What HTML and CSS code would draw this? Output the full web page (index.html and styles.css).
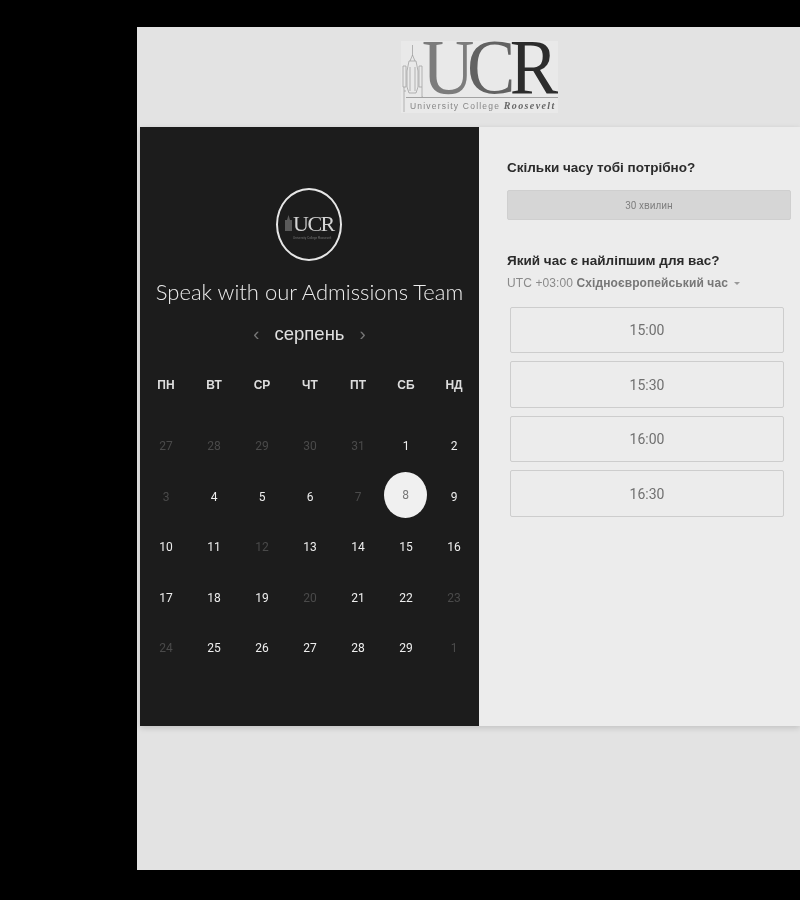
FILE: index.html
```html
<!DOCTYPE html>
<html lang="uk">
<head>
  <meta charset="UTF-8" />
  <title>Speak with our Admissions Team</title>
  <link rel="stylesheet" href="styles.css">
</head>
<body>
  <div class="page">
    <header class="top">
      <div class="logo">
        <svg class="tower" viewBox="0 0 22 72" width="22" height="72" fill="none" stroke="#a2a2a2" stroke-width="0.8">
          <path d="M11.5 4V15M9 20L11.5 14L14 20" />
          <path d="M8 20H15L17 30V46L15 52H8L6 46V30Z" />
          <path d="M9 26V50M14 26V50" />
          <path d="M2 25H5V46H2ZM18 25H21V46H18Z" />
          <path d="M3 46V71M5 50H3M21 46V56H22" />
        </svg>
        <div class="logo-text">
          <div class="logo-ucr"><span class="u">U</span><span class="c">C</span><span class="r">R</span></div>
          <div class="logo-sub">University College <em>Roosevelt</em></div>
        </div>
      </div>
    </header>

    <main class="panel">
      <section class="calendar">
        <div class="badge">
          <svg class="badge-tower" viewBox="0 0 7 16" width="7" height="16"><path d="M3.5 0L5 5H7V16H0V5H2Z" fill="#5a5a5a" /></svg>
          <div class="badge-words">
            <div class="badge-text">UCR</div>
            <div class="badge-sub">University College Roosevelt</div>
          </div>
        </div>
        <h1 class="title">Speak with our Admissions Team</h1>
        <div class="month">
          <span class="arrow">‹</span>
          <span>серпень</span>
          <span class="arrow">›</span>
        </div>
        <div class="weekdays">
          <span>ПН</span><span>ВТ</span><span>СР</span><span>ЧТ</span><span>ПТ</span><span>СБ</span><span>НД</span>
        </div>
        <div class="days">
          <span class="off">27</span><span class="off">28</span><span class="off">29</span><span class="off">30</span><span class="off">31</span><span>1</span><span>2</span>
          <span class="off">3</span><span>4</span><span>5</span><span>6</span><span class="off">7</span><span class="sel">8</span><span>9</span>
          <span>10</span><span>11</span><span class="off">12</span><span>13</span><span>14</span><span>15</span><span>16</span>
          <span>17</span><span>18</span><span>19</span><span class="off">20</span><span>21</span><span>22</span><span class="off">23</span>
          <span class="off">24</span><span>25</span><span>26</span><span>27</span><span>28</span><span>29</span><span class="off">1</span>
        </div>
      </section>

      <section class="times">
        <h2 class="q first">Скільки часу тобі потрібно?</h2>
        <div class="duration">30 хвилин</div>
        <h2 class="q second">Який час є найліпшим для вас?</h2>
        <div class="zone">UTC +03:00 <b>Східноєвропейський час</b> <i class="caret"></i></div>
        <div class="slots">
          <button class="slot">15:00</button>
          <button class="slot">15:30</button>
          <button class="slot">16:00</button>
          <button class="slot">16:30</button>
        </div>
      </section>
    </main>
  </div>
</body>
</html>
```

FILE: styles.css
```css
html, body {
  height: 100%;
}
body {
  margin: 0;
  background: #000;
  padding: 27px 0 30px 137px;
  box-sizing: border-box;
  overflow: hidden;
  font-family: "Liberation Sans", Arial, sans-serif;
}
/* the whole screenshot is grey and slightly soft */
.page {
  height: 843px;
  width: 663px;
  background: #e3e3e3;
  filter: grayscale(1) blur(0.4px);
}
.top {
  height: 100px;
  box-sizing: border-box;
  padding: 14px 0 0 264px;
}
.logo {
  width: 157px;
  height: 72px;
  background: #e9e9e9;
  display: flex;
}
.tower {
  flex: none;
}
.logo-text {
  width: 135px;
}
.logo-ucr {
  display: flex;
  height: 56px;
  margin-left: -1px;
  font-family: "Liberation Serif", serif;
  font-size: 78px;
  line-height: 52px;
  transform: scaleX(0.93);
  transform-origin: left top;
}
.logo-ucr span {
  display: block;
}
.logo-ucr .u { color: #7c7c7c; }
.logo-ucr .c { color: #626262; margin-left: -8px; }
.logo-ucr .r { color: #2c2c2c; margin-left: -6px; }
.logo-sub {
  border-top: 1px solid #a2a2a2;
  margin-left: -17px;
  font-size: 8.5px;
  letter-spacing: 1.2px;
  line-height: 14px;
  padding: 1px 0 0 4px;
  color: #858585;
  white-space: nowrap;
}
.logo-sub em {
  font-family: "Liberation Serif", serif;
  font-size: 10px;
  letter-spacing: 1.4px;
  font-weight: bold;
  color: #666;
}
.panel {
  display: flex;
  height: 599px;
  margin-left: 3px;
  background: #ececec;
  box-shadow: 0 2px 6px rgba(0,0,0,0.15);
}
.calendar {
  width: 339px;
  flex: none;
  background: #1c1c1c;
  box-sizing: border-box;
  padding-top: 61px;
  color: #eee;
}
.badge {
  width: 66px;
  height: 73px;
  margin-left: 136px;
  border: 2px solid #e6e6e6;
  border-radius: 50%;
  box-sizing: border-box;
  display: flex;
  align-items: center;
  justify-content: center;
  gap: 1px;
}
.badge-tower {
  flex: none;
  margin-top: -4px;
}
.badge-words {
  width: 40px;
  margin-top: 1px;
}
.badge-text {
  font-family: "Liberation Serif", serif;
  font-size: 22px;
  line-height: 25px;
  letter-spacing: -1.5px;
  color: #d4d4d4;
}
.badge-sub {
  font-size: 3px;
  line-height: 4px;
  color: #777;
  white-space: nowrap;
}
.title {
  margin: 15px 0 0 0;
  font-family: Lato, sans-serif;
  font-weight: 300;
  font-size: 22px;
  line-height: 32px;
  text-align: center;
  color: #ececec;
  white-space: nowrap;
}
.month {
  margin-top: 14px;
  display: flex;
  justify-content: center;
  align-items: center;
  gap: 15px;
  font-size: 18.5px;
  line-height: 24px;
  color: #e0e0e0;
}
.arrow {
  color: #777;
}
.weekdays, .days {
  display: grid;
  grid-template-columns: repeat(7, 48px);
  margin-left: 2px;
  text-align: center;
}
.weekdays {
  margin-top: 31px;
  font-size: 12px;
  font-weight: 700;
  line-height: 16px;
  color: #ddd;
}
.days {
  margin-top: 28px;
  grid-auto-rows: 50.5px;
  font-family: Roboto, sans-serif;
  font-size: 12px;
  color: #eee;
  align-items: center;
  justify-items: center;
}
.days .off {
  color: #4a4a4a;
}
.days .sel {
  width: 43px;
  height: 46px;
  border-radius: 50%;
  background: #f0f0f0;
  color: #777;
  display: flex;
  align-items: center;
  justify-content: center;
  margin: -4px 1px 0 0;
}
.times {
  flex: 1;
  box-sizing: border-box;
  padding: 33px 9px 0 28px;
}
.q {
  margin: 0;
  font-size: 13.5px;
  font-weight: 700;
  line-height: 16px;
  color: #2b2b2b;
}
.duration {
  margin-top: 14px;
  height: 30px;
  line-height: 30px;
  background: #d6d6d6;
  border: 1px solid #cfcfcf;
  box-sizing: border-box;
  border-radius: 2px;
  text-align: center;
  font-family: Roboto, sans-serif;
  font-size: 10px;
  color: #808080;
}
.q.second {
  margin-top: 33px;
}
.zone {
  margin-top: 6px;
  font-size: 12px;
  letter-spacing: 0.1px;
  line-height: 16px;
  color: #8a8a8a;
  white-space: nowrap;
}
.zone b {
  color: #777;
}
.caret {
  display: inline-block;
  margin-left: 3px;
  vertical-align: 2px;
  border: 3px solid transparent;
  border-top: 3px solid #999;
  border-bottom: 0;
}
.slots {
  margin: 16px 7px 0 3px;
  display: flex;
  flex-direction: column;
  gap: 8.2px;
}
.slot {
  height: 46.3px;
  background: #ececec;
  border: 1px solid #cdcdcd;
  border-radius: 2px;
  font-family: Roboto, sans-serif;
  font-size: 14px;
  color: #707070;
  padding: 0;
}
```
